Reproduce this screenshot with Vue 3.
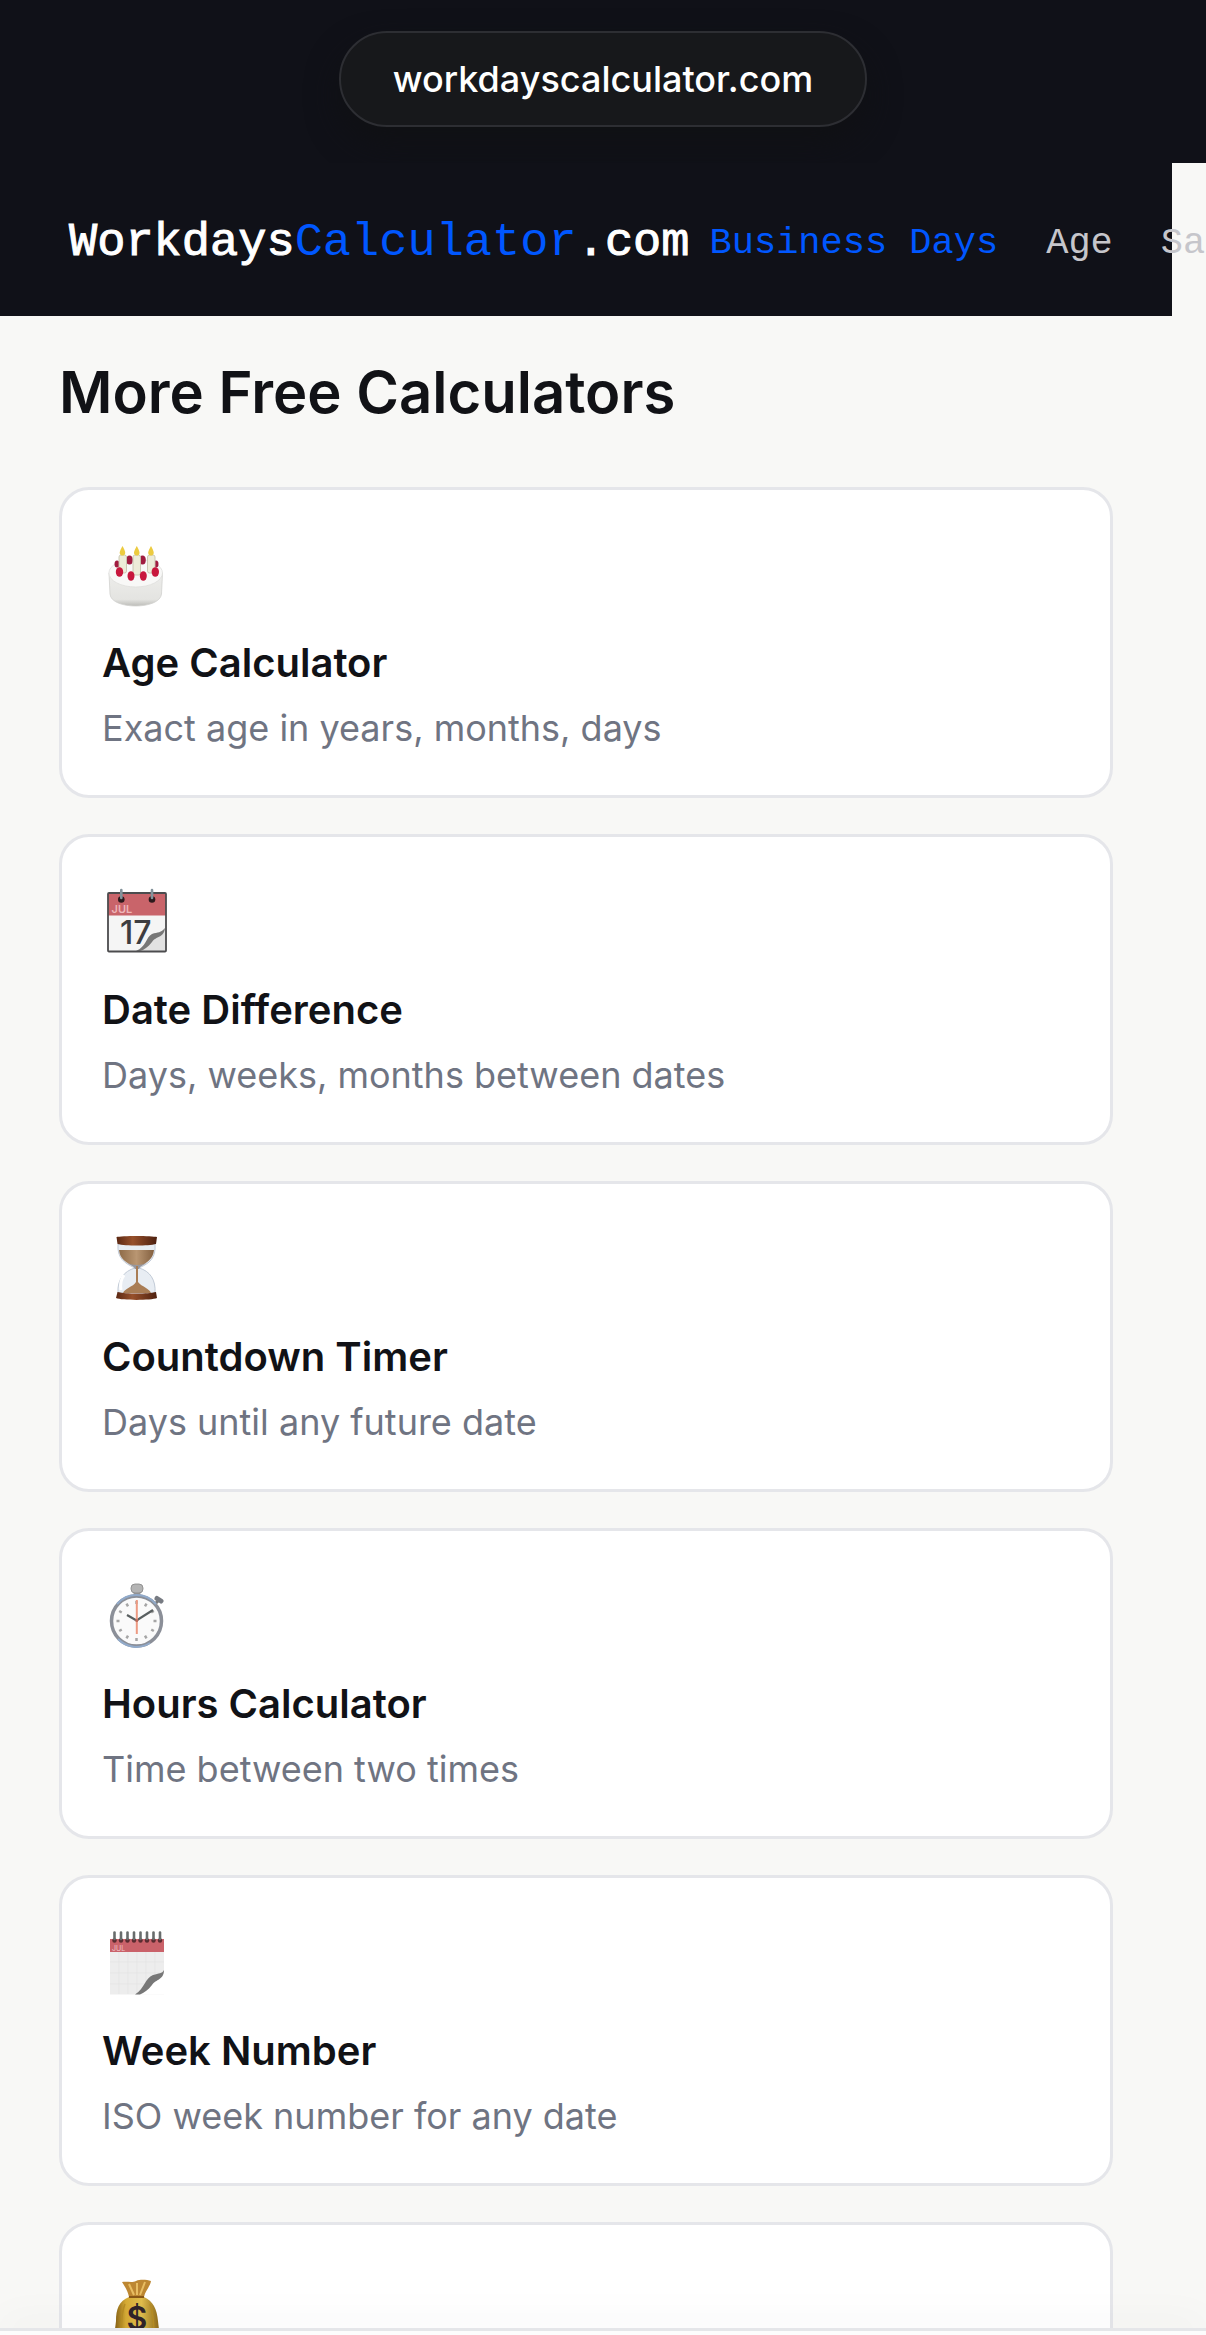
<script setup>
const navLinks = [
  { label: 'Business Days', href: '#business-days', active: true },
  { label: 'Age', href: '#age' },
  { label: 'Salary', href: '#salary' }
]

const calculators = [
  { id: 'age', title: 'Age Calculator', desc: 'Exact age in years, months, days', viewBox: '12 5 72 72' },
  { id: 'difference', title: 'Date Difference', desc: 'Days, weeks, months between dates', viewBox: '12 12 72 72' },
  { id: 'countdown', title: 'Countdown Timer', desc: 'Days until any future date', viewBox: '12 9 72 72' },
  { id: 'hours', title: 'Hours Calculator', desc: 'Time between two times', viewBox: '12 10 72 72' },
  { id: 'week', title: 'Week Number', desc: 'ISO week number for any date', viewBox: '12 12 72 72' },
  { id: 'salary', title: 'Salary Calculator', desc: 'Annual, monthly, hourly pay', viewBox: '102 59 72 72' }
]

// hour marks of the stopwatch
const ticks = Array.from({ length: 12 }, (_, i) => i * 30)
</script>

<template>
  <div class="screen">
    <div class="url-bar">
      <button type="button" class="url-pill">workdayscalculator.com</button>
    </div>

    <div class="page">
      <header class="site-header">
        <a href="#" class="logo">Workdays<span>Calculator</span>.com</a>
        <nav class="nav">
          <a
            v-for="link in navLinks"
            :key="link.label"
            :href="link.href"
            :class="{ active: link.active }"
          >{{ link.label }}</a>
        </nav>
      </header>

      <main class="content">
        <h2>More Free Calculators</h2>
        <div class="cards">
          <a v-for="calc in calculators" :key="calc.id" :href="'#' + calc.id" class="card">
            <svg class="icon" :viewBox="calc.viewBox" aria-hidden="true">
              <!-- Cake -->
              <g v-if="calc.id === 'age'">
                <defs>
                  <linearGradient id="cakeSide" x1="0" y1="0" x2="0" y2="1">
                    <stop offset="0" stop-color="#ededeb" />
                    <stop offset="0.8" stop-color="#e4e4e1" />
                    <stop offset="1" stop-color="#bcbcb8" />
                  </linearGradient>
                </defs>
                <path d="M19 43 L20 64 C21 80 70 80 71.500 64 L72.500 43Z" fill="url(#cakeSide)" stroke="#d2d2cf" stroke-width="0.800" />
                <ellipse cx="45.700" cy="43" rx="26.800" ry="14" fill="#f8f8f7" stroke="#dededc" stroke-width="0.800" />
                <g fill="#a01c40">
                  <ellipse cx="39.500" cy="30" rx="3.300" ry="4.500" />
                  <ellipse cx="52.500" cy="30" rx="3.300" ry="4.500" />
                  <ellipse cx="27" cy="34" rx="2.500" ry="3.500" />
                  <ellipse cx="66" cy="34" rx="2.500" ry="3.500" />
                </g>
                <g fill="#edecd8" stroke="#c6c4ae" stroke-width="0.900">
                  <rect x="29" y="25" width="7.500" height="18" rx="2" />
                  <rect x="43" y="25" width="7.500" height="20" rx="2" />
                  <rect x="57.500" y="25" width="7.500" height="18" rx="2" />
                </g>
                <g fill="#eccb40">
                  <path d="M32.500 16 C34 19 36 22 35 24 C34 26 31 26 30 24 C29 22 31 19 32.500 16Z" />
                  <path d="M46.800 16 C48.300 19 50.300 22 49.300 24 C48.300 26 45.300 26 44.300 24 C43.300 22 45.300 19 46.800 16Z" />
                  <path d="M61 16 C62.500 19 64.500 22 63.500 24 C62.500 26 59.500 26 58.500 24 C57.500 22 59.500 19 61 16Z" />
                </g>
                <g fill="#c8173d">
                  <ellipse cx="29.500" cy="42" rx="3.700" ry="4.800" />
                  <ellipse cx="41" cy="46" rx="3.500" ry="4.800" />
                  <ellipse cx="53.300" cy="46" rx="3.500" ry="4.800" />
                  <ellipse cx="65.300" cy="42" rx="3.700" ry="4.800" />
                </g>
              </g>

              <!-- Tear-off calendar -->
              <g v-else-if="calc.id === 'difference'">
                <rect x="18" y="23" width="58" height="58.500" rx="1" fill="#f5f5f5" />
                <rect x="18" y="23" width="58" height="22.500" fill="#c9646a" />
                <text x="21.500" y="43" class="cal-month">JUL</text>
                <text x="30" y="74" class="cal-day">17</text>
                <path d="M48 81 C57 79 57 68 63 66 C69 64 73 63 75.500 58 V81Z" fill="#e2e2e2" />
                <path d="M46 81 C56 77 56 67 62 64 C68 62 71 63 75 58 C74 68 66 66 62 72 C58 77 54 80 50 81Z" fill="#777" />
                <rect x="18" y="23" width="58" height="58.500" rx="1" fill="none" stroke="#4c4c4e" stroke-width="1.800" />
                <circle cx="31.300" cy="29.500" r="3.300" fill="#2c191c" />
                <circle cx="62" cy="29.500" r="3.300" fill="#2c191c" />
                <path d="M31.300 20V28M62 20V28" stroke="#83939b" stroke-width="2.600" stroke-linecap="round" />
              </g>

              <!-- Hourglass -->
              <g v-else-if="calc.id === 'countdown'">
                <defs>
                  <linearGradient id="wood" x1="0" x2="1">
                    <stop offset="0" stop-color="#5b2813" />
                    <stop offset="0.4" stop-color="#97502b" />
                    <stop offset="1" stop-color="#4d200f" />
                  </linearGradient>
                  <linearGradient id="sand" x1="0" x2="1">
                    <stop offset="0" stop-color="#8e6b48" />
                    <stop offset="0.5" stop-color="#b99672" />
                    <stop offset="1" stop-color="#836040" />
                  </linearGradient>
                </defs>
                <path d="M28 24H65C66 38 60 43 49 48C60 51 66 60 65 73H28C27 60 34 51 45 48C34 43 27 38 28 24Z" fill="#e8edf3" stroke="#c2cbd7" stroke-width="1" />
                <path d="M29 30H64C63 39 57 43 49.500 46.500H44.500C36 43 30 39 29 30Z" fill="url(#sand)" />
                <path d="M36 42C41 46 53 46 58 42C54 45 50 46 49 49H45C44 46 40 45 36 42Z" fill="#96979f" />
                <path d="M46 46H48V62C52 67 59 68 61 73H33C35 68 43 67 46 62Z" fill="#a97d55" />
                <path d="M34 55C31 59 30 64 31 70" fill="none" stroke="#fff" stroke-width="3" />
                <path d="M26.500 17C31 15.500 62 15.500 67 17L66 24C58 26 36 26 27.500 24Z" fill="url(#wood)" />
                <path d="M27.500 72C36 74 58 74 66 72L67 78C61 80.500 32 80.500 26 78Z" fill="url(#wood)" />
              </g>

              <!-- Stopwatch -->
              <g v-else-if="calc.id === 'hours'">
                <rect x="43.500" y="23" width="7" height="7" fill="#999" />
                <rect x="41" y="18" width="12" height="9" rx="4" fill="#b4b4b4" stroke="#858585" stroke-width="0.800" />
                <path d="M65 38L69 34" stroke="#777" stroke-width="3" />
                <path d="M67 32.500L71 35" stroke="#777b82" stroke-width="5" stroke-linecap="round" />
                <circle cx="46.500" cy="55" r="25" fill="#fafafa" stroke="#8b8f98" stroke-width="3.500" />
                <path d="M27 38A25.500 25.500 0 0 1 66 38M28 73A25.500 25.500 0 0 0 60 77" fill="none" stroke="#91aaca" stroke-width="2" />
                <path
                  v-for="deg in ticks"
                  :key="deg"
                  d="M46.500 35V38"
                  :transform="`rotate(${deg} 46.500 55)`"
                  stroke="#a5a5a5"
                  stroke-width="2.500"
                />
                <path d="M37 49L46.500 54.500L63 44" fill="none" stroke="#595f60" stroke-width="2.200" />
                <path d="M46.800 34V68" stroke="#ed9a82" stroke-width="2" />
                <circle cx="46.800" cy="54.500" r="1.500" fill="#bd6b5b" />
              </g>

              <!-- Spiral calendar -->
              <g v-else-if="calc.id === 'week'">
                <rect x="20" y="28" width="54" height="55.500" fill="#ededed" />
                <rect x="20" y="28" width="54" height="13" fill="#ca626a" />
                <text x="22" y="39.500" class="spiral-month">JUL</text>
                <path d="M29 41V83M38 41V83M47 41V83M56 41V83M65 41V83M20 51H74M20 62H74M20 73H74" stroke="#e3e3e3" stroke-width="0.600" />
                <path d="M47 83.500C57 78 57 68 65 65C70 63 72 63 74 60V83.500Z" fill="#fff" />
                <path d="M45 83.500C55 77 55 67 63 64C69 62 72 63 74 59C74 69 66 68 62 74C58 79 54 82 50 83.500Z" fill="#777" />
                <g v-for="n in 8" :key="n">
                  <circle :cx="18 + n * 6.500" cy="29.500" r="2.200" fill="#5b2b30" />
                  <path :d="`M${18 + n * 6.500} 21.500V28`" stroke="#686c6c" stroke-width="2.600" stroke-linecap="round" />
                </g>
              </g>

              <!-- Money bag -->
              <g v-else>
                <defs>
                  <linearGradient id="bag" x1="0" x2="1">
                    <stop offset="0" stop-color="#856014" />
                    <stop offset="0.25" stop-color="#d6ab35" />
                    <stop offset="0.6" stop-color="#e0bd4d" />
                    <stop offset="1" stop-color="#8e6919" />
                  </linearGradient>
                </defs>
                <path d="M129 86C119 90 116 98 116 110C115 120 113 126 118 129H156C161 126 159 120 158 110C157 98 153 90 144 86Z" fill="url(#bag)" />
                <path d="M122 71C127 70 132 72 136 70C141 68 147 69 151 70C150 76 145 80 144 86H129C128 80 125 76 122 71Z" fill="#bd8732" />
                <path d="M129 73L134 84M137 72V84M145 71L140 84" stroke="#e8bd62" stroke-width="2" />
                <path d="M129 86H144" stroke="#895716" stroke-width="2" />
                <path d="M125 93C121 102 121 115 121 126M150 93C153 102 154 115 154 126" stroke="#b78d24" stroke-width="1.500" fill="none" />
                <text x="137" y="119" class="bag-sign">$</text>
              </g>
            </svg>
            <h3>{{ calc.title }}</h3>
            <p>{{ calc.desc }}</p>
          </a>
        </div>
      </main>
    </div>

    <div class="bottom-bar"></div>
  </div>
</template>

<style>
body {
  margin: 0;
  background: #f8f8f6;
}
</style>

<style scoped>
.screen {
  height: 100vh;
  display: flex;
  flex-direction: column;
  overflow: hidden;
  background: #f8f8f6;
  font-family: Inter, "Liberation Sans", sans-serif;
}

a {
  color: inherit;
  text-decoration: none;
}

.url-bar {
  flex: none;
  display: flex;
  justify-content: center;
  padding: 31px 0 36px;
  background: #101118;
}

.url-pill {
  height: 96px;
  padding: 0 52px;
  border: 2px solid #2d2e33;
  border-radius: 48px;
  background: #17181b;
  box-shadow: 0 16px 32px #101114;
  color: #fff;
  font-family: inherit;
  font-size: 36px;
  font-weight: 500;
}

.page {
  flex: 1;
  min-height: 0;
  overflow: hidden;
  padding-right: 34px;
}

.site-header {
  height: 153px;
  box-sizing: border-box;
  display: flex;
  align-items: center;
  gap: 20px;
  padding: 6px 0 0 69px;
  background: #101118;
  font-family: "Liberation Mono", monospace;
  white-space: nowrap;
}

.logo {
  color: #fff;
  font-size: 47px;
  -webkit-text-stroke: 1px currentColor;
}

.logo span {
  color: #0057ff;
  -webkit-text-stroke: 0;
}

.nav {
  display: flex;
  gap: 48px;
  color: #c6c6cb;
  font-size: 37px;
}

.nav .active {
  color: #0057ff;
}

.content {
  padding: 40px 59px;
}

h2 {
  margin: 0 0 59px;
  color: #111216;
  font-size: 58px;
  font-weight: 600;
  line-height: 72px;
}

.cards {
  display: grid;
  gap: 36px;
}

.card {
  display: flex;
  flex-direction: column;
  padding: 45px 40px 40px;
  border: 3px solid #e5e6ea;
  border-radius: 30px;
  background: #fff;
}

.icon {
  width: 72px;
  height: 72px;
  margin-bottom: 26px;
}

h3 {
  margin: 0 0 8px;
  color: #111216;
  font-size: 40px;
  font-weight: 600;
  line-height: 60px;
}

p {
  margin: 0;
  color: #6f7482;
  font-size: 36px;
  line-height: 54px;
}

.cal-month {
  fill: #eeb5b8;
  font-size: 11px;
  font-weight: 600;
}

.cal-day {
  fill: #3d3d40;
  font-size: 32px;
  font-weight: 500;
}

.spiral-month {
  fill: #efc2c5;
  font-size: 7px;
}

.bag-sign {
  fill: #30242a;
  font-size: 32px;
  font-weight: 600;
  text-anchor: middle;
}

.bottom-bar {
  position: relative;
  flex: none;
  height: 4px;
  border-top: 3px solid #e5e6e9;
  background: #fcfcfc;
  box-shadow: 0 0 44px rgba(0, 0, 0, 0.12);
}
</style>
